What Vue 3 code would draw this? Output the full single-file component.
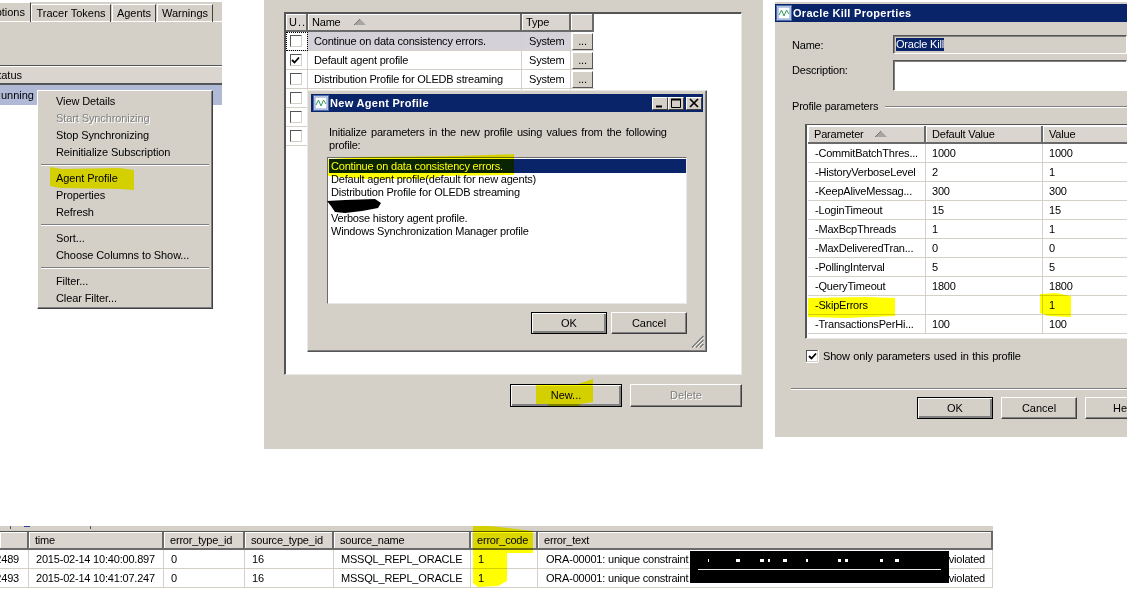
<script setup>
const tabs = ['Tracer Tokens', 'Agents', 'Warnings']
const menuGroups = [
  [{ t: 'View Details' }, { t: 'Start Synchronizing', off: true }, { t: 'Stop Synchronizing' }, { t: 'Reinitialize Subscription' }],
  [{ t: 'Agent Profile' }, { t: 'Properties' }, { t: 'Refresh' }],
  [{ t: 'Sort...' }, { t: 'Choose Columns to Show...' }],
  [{ t: 'Filter...' }, { t: 'Clear Filter...' }]
]
const profiles = [
  { n: 'Continue on data consistency errors.', ty: 'System', sel: true },
  { n: 'Default agent profile', ty: 'System', on: true },
  { n: 'Distribution Profile for OLEDB streaming', ty: 'System' },
  { n: '', ty: '' }, { n: '', ty: '' }, { n: '', ty: '' }
]
const listItems = [
  'Continue on data consistency errors.',
  'Default agent profile(default for new agents)',
  'Distribution Profile for OLEDB streaming',
  '',
  'Verbose history agent profile.',
  'Windows Synchronization Manager profile'
]
const params = [
  ['-CommitBatchThres...', '1000', '1000'],
  ['-HistoryVerboseLevel', '2', '1'],
  ['-KeepAliveMessag...', '300', '300'],
  ['-LoginTimeout', '15', '15'],
  ['-MaxBcpThreads', '1', '1'],
  ['-MaxDeliveredTran...', '0', '0'],
  ['-PollingInterval', '5', '5'],
  ['-QueryTimeout', '1800', '1800'],
  ['-SkipErrors', '', '1'],
  ['-TransactionsPerHi...', '100', '100']
]
const errorCols = ['', 'time', 'error_type_id', 'source_type_id', 'source_name', 'error_code', 'error_text']
const errorRows = [
  ['2489', '2015-02-14 10:40:00.897', '0', '16', 'MSSQL_REPL_ORACLE', '1', 'ORA-00001: unique constraint'],
  ['2493', '2015-02-14 10:41:07.247', '0', '16', 'MSSQL_REPL_ORACLE', '1', 'ORA-00001: unique constraint']
]
const dots = [[708, 1], [736, 4], [760, 4], [768, 2], [783, 4], [806, 2], [838, 3], [845, 3], [880, 3], [895, 4]]
</script>

<template>
  <div class="canvas">
    <!-- Subscription list with context menu -->
    <section class="left">
      <div class="tabs">
        <div class="tab first">Subscriptions</div>
        <div v-for="t in tabs" :key="t" class="tab">{{ t }}</div>
      </div>
      <div class="left-body"></div>
      <div class="left-head">Status</div>
      <div class="left-row">Running</div>
    </section>
    <nav class="menu">
      <template v-for="(g, i) in menuGroups" :key="i">
        <div v-if="i" class="menu-sep"></div>
        <div v-for="m in g" :key="m.t" class="menu-item" :class="{ off: m.off }">{{ m.t }}</div>
      </template>
    </nav>

    <!-- Profiles window -->
    <section class="mid">
      <div class="white-box">
        <div class="pgrid phead">
          <div class="hcell u">U...</div>
          <div class="hcell name">Name
            <svg class="sort" width="12" height="6" viewBox="0 0 12 6"><path d="M6 0 L12 6 H0Z" fill="#a8a5a0" /><path d="M6 0 L0 6" stroke="#77746f" fill="none" /></svg>
          </div>
          <div class="hcell ty">Type</div>
          <div class="hcell"></div>
        </div>
        <div v-for="(p, i) in profiles" :key="i" class="pgrid prow" :class="{ sel: p.sel }">
          <div class="cell ccell" :class="{ focus: p.sel }">
            <span class="check">
              <svg v-if="p.on" width="9" height="9" viewBox="0 0 9 9"><path d="M1 4 L3.5 6.5 L8 1.5" stroke="#000" stroke-width="1.8" fill="none" /></svg>
            </span>
          </div>
          <div class="cell n">{{ p.n }}</div>
          <div class="cell t">{{ p.ty }}</div>
          <div class="cell b"><span v-if="p.ty" class="dots">...</span></div>
        </div>
      </div>
      <div class="mid-actions">
        <button class="btn def wide">New...</button>
        <button class="btn wide dis">Delete</button>
      </div>
    </section>

    <!-- New Agent Profile dialog -->
    <section class="dialog">
      <header class="titlebar">
        <svg class="appicon" width="16" height="16" viewBox="0 0 16 16">
          <rect x="0.5" y="0.5" width="15" height="15" fill="#dfe6f2" stroke="#4a6aa8" />
          <rect x="2" y="2" width="12" height="12" fill="#fff" stroke="#7f9ccc" />
          <path d="M3 10 L5.5 5 L8 11 L10.5 5 L13 9" stroke="#2f9e5a" fill="none" />
        </svg>
        <span class="title-text">New Agent Profile</span>
        <div class="wbtns">
          <span class="wbtn"><svg width="10" height="10" viewBox="0 0 10 10"><path d="M1 8.5 H7" stroke="#000" stroke-width="2" /></svg></span>
          <span class="wbtn"><svg width="10" height="10" viewBox="0 0 10 10"><path d="M0.5 1.5 H9.5 V9.5 H0.5Z M0.5 1.5 H9.5" stroke="#000" fill="none" /><path d="M0 1.5 H10" stroke="#000" stroke-width="2" /></svg></span>
          <span class="wbtn gap"><svg width="10" height="10" viewBox="0 0 10 10"><path d="M1 1 L9 9 M9 1 L1 9" stroke="#000" stroke-width="1.7" /></svg></span>
        </div>
      </header>
      <p class="intro">Initialize parameters in the new profile using values from the following profile:</p>
      <div class="listbox">
        <div v-for="(it, i) in listItems" :key="i" class="li" :class="{ cur: i === 0 }">{{ it }}</div>
      </div>
      <div class="dlg-actions">
        <button class="btn def std">OK</button>
        <button class="btn std">Cancel</button>
      </div>
      <svg class="grip" width="13" height="13" viewBox="0 0 13 13">
        <path d="M12.5 1 L1 12.5 M12.5 5 L5 12.5 M12.5 9 L9 12.5" stroke="#6f6f6f" stroke-width="1.2" fill="none" />
        <path d="M12.5 2.4 L2.4 12.5 M12.5 6.4 L6.4 12.5 M12.5 10.4 L10.4 12.5" stroke="#fff" stroke-width="0.8" fill="none" />
      </svg>
    </section>

    <!-- Oracle Kill Properties -->
    <section class="right">
      <header class="titlebar wide-title">
        <svg class="appicon" width="16" height="16" viewBox="0 0 16 16">
          <rect x="0.5" y="0.5" width="15" height="15" fill="#dfe6f2" stroke="#4a6aa8" />
          <rect x="2" y="2" width="12" height="12" fill="#fff" stroke="#7f9ccc" />
          <path d="M3 10 L5.5 5 L8 11 L10.5 5 L13 9" stroke="#2f9e5a" fill="none" />
        </svg>
        <span class="title-text">Oracle Kill Properties</span>
      </header>
      <div class="field f1">
        <label>Name:</label>
        <div class="input i1"><span class="seltext">Oracle Kill</span></div>
      </div>
      <div class="field f2">
        <label>Description:</label>
        <div class="input i2"></div>
      </div>
      <div class="group"><span>Profile parameters</span><i></i></div>
      <div class="ptable">
        <div class="rgrid">
          <div class="hcell rh">Parameter
            <svg class="sort" width="12" height="6" viewBox="0 0 12 6"><path d="M6 0 L12 6 H0Z" fill="#a8a5a0" /><path d="M6 0 L0 6" stroke="#77746f" fill="none" /></svg>
          </div>
          <div class="hcell rh">Default Value</div>
          <div class="hcell rh">Value</div>
        </div>
        <div v-for="r in params" :key="r[0]" class="rgrid rrow">
          <div class="rc first-c">{{ r[0] }}</div>
          <div class="rc">{{ r[1] }}</div>
          <div class="rc">{{ r[2] }}</div>
        </div>
      </div>
      <div class="showonly">
        <span class="check small">
          <svg width="9" height="9" viewBox="0 0 9 9"><path d="M1 4 L3.5 6.5 L8 1.5" stroke="#000" stroke-width="1.8" fill="none" /></svg>
        </span>
        <span>Show only parameters used in this profile</span>
      </div>
      <div class="rule"></div>
      <div class="right-actions">
        <button class="btn def std">OK</button>
        <button class="btn std">Cancel</button>
        <button class="btn std help">Help</button>
      </div>
    </section>

    <!-- Error table -->
    <section class="errors">
      <div class="etabs"><i class="e1"></i><i class="e2"></i><i class="e3"></i></div>
      <div class="egrid ehead">
        <div v-for="(c, i) in errorCols" :key="i" class="hcell eh">{{ c }}</div>
      </div>
      <div v-for="r in errorRows" :key="r[0]" class="egrid erow">
        <div class="ec clip">{{ r[0] }}</div>
        <div class="ec">{{ r[1] }}</div>
        <div class="ec">{{ r[2] }}</div>
        <div class="ec">{{ r[3] }}</div>
        <div class="ec">{{ r[4] }}</div>
        <div class="ec">{{ r[5] }}</div>
        <div class="ec last"><span>{{ r[6] }}</span><span>violated</span></div>
      </div>
    </section>

    <!-- Marker highlights painted over the screenshots -->
    <svg class="marker" width="1127" height="592" viewBox="0 0 1127 592">
      <path d="M50 167 L62 169 L120 168 L134 170 L134 190 L120 189 L60 188 L50 186Z" />
      <path d="M328 159 L365 157 L455 156 L514 154 L514 175 L440 176 L430 179 L364 179 L328 176Z" />
      <path d="M536 385 L575 385 L593 379 L593 402 L580 404 L579 407 L549 407 L548 404 L536 404Z" />
      <path d="M808 298 L865 297 L895 298 L895 316 L845 318 L808 317Z" />
      <path d="M1040 294 L1056 293 L1071 296 L1071 317 L1048 316 L1040 313Z" />
      <path d="M473 526 L490 526 L533 531 L533 553 L507 553 L507 581 L498 586 L478 587 L473 583Z" />
    </svg>
    <svg class="ink" width="1127" height="592" viewBox="0 0 1127 592">
      <path d="M327 201 L345 200 L375 199 L381 203 L378 208 L362 211 L345 213 L335 212 L331 206Z" fill="#000" />
      <rect x="690" y="551" width="259" height="32" fill="#000" />
      <rect x="698" y="569" width="243" height="1" fill="#e8e8e8" />
      <rect v-for="d in dots" :key="d[0]" :x="d[0]" y="559" :width="d[1]" height="3" fill="#fff" />
    </svg>
  </div>
</template>

<style>
html, body { margin: 0; background: #fff; }
</style>

<style scoped>
.canvas {
  position: relative;
  width: 1127px;
  height: 592px;
  overflow: hidden;
  background: #fff;
  color: #000;
  font: 11px/13px "Liberation Sans", Arial, sans-serif;
  letter-spacing: -0.2px;
}
button { font: inherit; color: inherit; padding: 0; background: #d4d0c8; cursor: default; }

/* left */
.left { position: absolute; left: 0; top: 2px; width: 222px; letter-spacing: 0; }
.tabs { display: flex; height: 20px; background: #d4d0c8; padding-top: 2px; box-sizing: border-box; box-shadow: inset 0 -1px #fff; }
.tab {
  display: flex; align-items: center; justify-content: center; white-space: nowrap;
  height: 18px; box-sizing: border-box; padding: 0 5px;
  border-top: 1px solid #fff; border-left: 1px solid #fff; border-right: 1px solid #404040;
  font-size: 11px; margin-right: 1px;
}
.tab.first { width: 31px; justify-content: flex-end; padding: 0 5px 0 0; border-left: 0; margin-right: 0; margin-top: -2px; height: 20px; overflow: hidden; }
.tab:nth-child(2) { width: 80px; }
.tab:nth-child(3) { width: 44px; }
.tab:nth-child(4) { width: 56px; }
.left-body { height: 43px; background: #d4d0c8; border-bottom: 1px solid #555; }
.left-head {
  height: 16px; background: #dbd5d0; border-top: 1px solid #fff; border-bottom: 2px solid #555;
  display: flex; justify-content: flex-end; align-items: center; width: 22px; padding-right: 200px;
  white-space: nowrap; line-height: 16px;
}
.left-row {
  height: 20px; background: #b0b9d6; display: flex; justify-content: flex-end; align-items: center;
  width: 34px; padding-right: 188px; white-space: nowrap;
}
.menu {
  position: absolute; left: 37px; top: 90px; width: 176px; height: 219px; box-sizing: border-box;
  background: #d4d0c8; border: 1px solid; border-color: #fff #404040 #404040 #fff;
  box-shadow: inset -1px -1px #808080, inset 1px 1px #d4d0c8;
  padding: 2px 3px;
  letter-spacing: -0.1px;
}
.menu-item { height: 17px; line-height: 17px; padding-left: 15px; white-space: nowrap; }
.menu-item.off { color: #808080; text-shadow: 1px 1px #fff; }
.menu-sep { height: 9px; box-sizing: border-box; padding-top: 3px; }
.menu-sep::before { content: ""; display: block; height: 1px; background: #808080; border-bottom: 1px solid #fff; }

/* middle */
.mid { position: absolute; left: 264px; top: 0; width: 499px; height: 449px; background: #d4d0c8; box-sizing: border-box; padding: 12px 21px 0 20px; }
.white-box {
  height: 363px; box-sizing: border-box; background: #fff;
  border: 1px solid; border-color: #555 #e8e8e8 #e8e8e8 #555;
  box-shadow: inset 1px 1px #555;
  padding: 1px 0 0 1px;
}
.pgrid { display: grid; grid-template-columns: 22px 214px 49px 23px; width: 308px; }
.phead { height: 18px; }
.hcell {
  background: #dbd5d0; box-sizing: border-box; white-space: nowrap; overflow: hidden;
  border-right: 2px solid #6a6a6a; border-bottom: 2px solid #6a6a6a;
  box-shadow: inset 1px 1px #fff;
  display: flex; align-items: center; padding-left: 4px;
}
.hcell.u { padding-left: 3px; letter-spacing: 1px; }
.hcell.name .sort { margin-left: 13px; }
.rh .sort { margin-left: 11px; }
.prow { height: 19px; }
.cell { box-sizing: border-box; border-right: 1px solid #d4d0c8; border-bottom: 1px solid #d4d0c8; display: flex; align-items: center; white-space: nowrap; }
.cell.n { padding-left: 6px; }
.cell.t { padding-left: 7px; }
.cell.b { padding: 0 1px; border-right: 0; }
.prow.sel .n, .prow.sel .t { background: #d4d2d8; }
.ccell { justify-content: center; padding-right: 2px; }
.ccell.focus { outline: 1px dotted #000; outline-offset: -1px; }
.check {
  display: inline-flex; width: 12px; height: 12px; box-sizing: border-box; background: #fff;
  align-items: center; justify-content: center;
  border: 1px solid; border-color: #555 #d4d0c8 #d4d0c8 #555;
  box-shadow: 0 1px #fff, 1px 0 #fff;
}
.dots {
  display: flex; justify-content: center; align-items: flex-end; width: 100%; height: 17px; box-sizing: border-box;
  background: #d4d0c8; line-height: 13px; padding-bottom: 1px;
  border: 1px solid; border-color: #fff #555 #555 #fff;
}
.mid-actions { display: flex; justify-content: flex-end; gap: 8px; margin-top: 9px; }
.btn {
  border: 1px solid; border-color: #fff #404040 #404040 #fff;
  box-shadow: inset -1px -1px #808080;
  box-sizing: border-box;
  white-space: nowrap;
}
.btn.def { outline: 1px solid #000; outline-offset: -1px; border-color: #000; box-shadow: inset 1px 1px #fff, inset -2px -2px #808080; }
.btn.wide { width: 112px; height: 23px; }
.btn.std { width: 76px; height: 22px; }
.btn.dis { color: #808080; text-shadow: 1px 1px #fff; }

/* dialog */
.dialog {
  position: absolute; left: 307px; top: 90px; width: 400px; height: 262px; box-sizing: border-box;
  background: #d4d0c8; border: 1px solid; border-color: #e8e8e8 #555 #555 #e8e8e8;
  box-shadow: inset -1px -1px #808080;
  padding: 3px 3px 0;
}
.titlebar {
  height: 18px; background: #0a246a; color: #fff; display: flex; align-items: center; padding-left: 2px; box-sizing: border-box;
}
.appicon { flex: none; margin-right: 1px; }
.title-text { font-weight: 700; font-size: 11px; letter-spacing: 0.3px; white-space: nowrap; }
.wbtns { margin-left: auto; display: flex; padding-right: 1px; }
.wbtn {
  display: flex; align-items: center; justify-content: center; width: 16px; height: 13px; box-sizing: border-box;
  background: #d4d0c8; border: 1px solid; border-color: #fff #404040 #404040 #fff;
}
.wbtn.gap { margin-left: 2px; }
.intro { margin: 14px 16px 0 18px; line-height: 13px; word-spacing: 1.4px; }
.listbox {
  margin: 5px 16px 0 16px; height: 147px; box-sizing: border-box; background: #fff;
  border: 1px solid; border-color: #6a6a6a #e8e8e8 #e8e8e8 #6a6a6a;
  padding: 1px 0 0 1px;
}
.li { height: 13px; line-height: 13px; padding-left: 2px; white-space: nowrap; }
.li.cur { background: #0a246a; color: #fff; height: 14px; line-height: 14px; }
.dlg-actions { display: flex; justify-content: flex-end; gap: 4px; margin: 8px 16px 0 0; }
.grip { position: absolute; right: 2px; bottom: 3px; }

/* right */
.right { position: absolute; left: 775px; top: 2px; width: 352px; height: 435px; background: #d4d0c8; padding-top: 2px; box-sizing: border-box; overflow: hidden; }
.wide-title { width: 352px; padding-left: 1px; }
.field { display: flex; padding-left: 17px; }
.field label { width: 101px; flex: none; }
.f1 { margin-top: 13px; align-items: center; }
.f1 label { padding-top: 2px; }
.f2 { margin-top: 6px; }
.f2 label { padding-top: 4px; }
.input { flex: 1; box-sizing: border-box; background: #fff; border: 1px solid; border-color: #555 #fff #fff #555; box-shadow: inset 1px 1px #808080; }
.i1 { height: 19px; background: #d4d0c8; padding: 2px 0 0 2px; }
.seltext { background: #0a246a; color: #fff; display: inline-block; line-height: 13px; height: 13px; }
.i2 { height: 31px; }
.group { display: flex; align-items: center; margin-top: 9px; padding-left: 17px; height: 13px; gap: 7px; }
.group i { flex: 1; height: 1px; background: #808080; border-bottom: 1px solid #fff; }
.ptable {
  margin: 11px 0 0 30px; height: 215px; box-sizing: border-box; width: 340px;
  background: #fff; border: 1px solid; border-color: #555 #fff #e8e8e8 #555;
  box-shadow: inset 1px 0 #555;
  padding: 1px 0 0 2px;
}
.rgrid { display: grid; grid-template-columns: 118px 117px 110px; }
.rgrid:first-child { height: 18px; }
.rh { padding-left: 6px; }
.rrow { height: 19px; }
.rc { box-sizing: border-box; border-right: 1px solid #d4d0c8; border-bottom: 1px solid #d4d0c8; padding-left: 6px; line-height: 18px; white-space: nowrap; overflow: hidden; }
.rc.first-c { padding-left: 7px; }
.showonly { display: flex; align-items: center; gap: 5px; margin: 10px 0 0 31px; height: 14px; word-spacing: 0.8px; }
.check.small { width: 12px; height: 12px; }
.rule { height: 1px; background: #808080; border-bottom: 1px solid #fff; margin: 25px 0 0 16px; }
.right-actions { display: flex; gap: 8px; margin: 7px 0 0 142px; width: 300px; }
.right-actions .std { flex: none; }
.right-actions .help { text-align: left; padding-left: 27px; }

/* bottom table */
.errors { position: absolute; left: 0; top: 526px; width: 993px; }
.etabs { position: relative; height: 5px; background: #d4d0c8; border-bottom: 1px solid #555; box-sizing: content-box; }
.etabs i { position: absolute; top: 0; height: 3px; }
.etabs .e1 { left: 10px; width: 1px; background: #555; }
.etabs .e2 { left: 24px; width: 6px; height: 1px; background: #2a3f9a; }
.etabs .e3 { left: 90px; width: 1px; background: #555; }
.egrid { display: grid; grid-template-columns: 29px 135px 81px 89px 137px 67px 455px; }
.ehead { height: 18px; }
.eh { padding-left: 6px; }
.erow { height: 19px; }
.ec { box-sizing: border-box; border-right: 1px solid #d4d0c8; border-bottom: 1px solid #d4d0c8; padding-left: 7px; line-height: 18px; white-space: nowrap; overflow: hidden; }
.ec.clip { display: flex; justify-content: flex-end; padding: 0 9px 0 0; }
.ec.last { display: flex; justify-content: space-between; padding: 0 7px 0 8px; }

/* overlays */
.marker { position: absolute; left: 0; top: 0; pointer-events: none; mix-blend-mode: multiply; }
.marker path { fill: #ffff00; }
.ink { position: absolute; left: 0; top: 0; pointer-events: none; }
</style>
